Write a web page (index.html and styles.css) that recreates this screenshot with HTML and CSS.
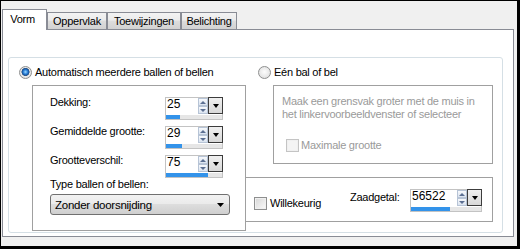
FILE: index.html
```html
<!DOCTYPE html>
<html lang="nl">
<head>
    <meta charset="UTF-8">
    <title>Vorm</title>
    <link rel="stylesheet" href="styles.css">
</head>
<body>
<div class="window">
    <!-- tabbladen -->
    <div class="tabs">
        <div class="tab active">Vorm</div>
        <div class="tab t-opp">Oppervlak</div>
        <div class="tab t-toe">Toewijzingen</div>
        <div class="tab t-bel">Belichting</div>
    </div>

    <div class="panel">
        <div class="group">
            <!-- linker kolom -->
            <div class="col-left">
                <div class="radio-row"><span class="radio on"></span>Automatisch meerdere ballen of bellen</div>
                <div class="box box-left">
                    <div class="fields">
                        <div class="field">
                            <span class="field-label">Dekking:</span>
                            <div class="spin">
                                <div class="spin-top"><span class="spin-val">25</span><span class="spin-arrows"><i class="up"></i><i class="down"></i></span><span class="spin-drop"></span></div>
                                <div class="spin-bar"><div class="spin-fill" style="width:25%"></div></div>
                            </div>
                        </div>
                        <div class="field">
                            <span class="field-label">Gemiddelde grootte:</span>
                            <div class="spin">
                                <div class="spin-top"><span class="spin-val">29</span><span class="spin-arrows"><i class="up"></i><i class="down"></i></span><span class="spin-drop"></span></div>
                                <div class="spin-bar"><div class="spin-fill" style="width:29%"></div></div>
                            </div>
                        </div>
                        <div class="field">
                            <span class="field-label">Grootteverschil:</span>
                            <div class="spin">
                                <div class="spin-top"><span class="spin-val">75</span><span class="spin-arrows"><i class="up"></i><i class="down"></i></span><span class="spin-drop"></span></div>
                                <div class="spin-bar"><div class="spin-fill" style="width:75%"></div></div>
                            </div>
                        </div>
                    </div>
                    <div class="type-label">Type ballen of bellen:</div>
                    <div class="combo">
                        <span>Zonder doorsnijding</span>
                        <svg width="7" height="4" viewBox="0 0 7 4"><polygon points="0,0 7,0 3.5,4" fill="#000"/></svg>
                    </div>
                </div>
            </div>

            <!-- rechter kolom -->
            <div class="col-right">
                <div class="radio-row"><span class="radio"></span>Eén bal of bel</div>
                <div class="box box-right">
                    <div class="hint">Maak een grensvak groter met de muis in<br>het linkervoorbeeldvenster of selecteer</div>
                    <div class="check-row disabled"><span class="check"></span>Maximale grootte</div>
                </div>
                <div class="box box-seed">
                    <div class="check-row seed-check"><span class="check"></span>Willekeurig</div>
                    <span class="seed-label">Zaadgetal:</span>
                    <div class="spin wide">
                        <div class="spin-top"><span class="spin-val">56522</span><span class="spin-arrows"><i class="up"></i><i class="down"></i></span><span class="spin-drop"></span></div>
                        <div class="spin-bar"><div class="spin-fill" style="width:56%"></div></div>
                    </div>
                </div>
            </div>
        </div>
    </div>
</div>
</body>
</html>
```

FILE: styles.css
```css
body {
    margin: 0;
    font-family: "Liberation Sans", Arial, sans-serif;
    font-size: 11px;
    letter-spacing: -0.25px;
    color: #000;
}
.window {
    width: 520px;
    height: 249px;
    box-sizing: border-box;
    border-style: solid;
    border-color: #000;
    border-width: 1px 3px 3px 1px;
    background: #f0f0f0;
    padding: 8px 0 0 1px;
}

/* tabs */
.tabs {
    display: flex;
    align-items: flex-end;
    height: 20px;
}
.tab {
    height: 17px;
    box-sizing: border-box;
    border: 1px solid #898c95;
    border-bottom: none;
    background: linear-gradient(#f3f3f3, #ebebeb 45%, #dddddd 50%, #d2d2d2);
    text-align: center;
    line-height: 14px;
    padding-top: 1px;
}
.tab.active {
    width: 45px;
    height: 21px;
    margin-bottom: -1px;
    padding: 2px 4px 0 0;
    background: #fff;
    position: relative;
    z-index: 1;
}
.t-opp { width: 60px; }
.t-toe { width: 74px; }
.t-bel { width: 56px; }

.panel {
    width: 512px;
    height: 208px;
    box-sizing: border-box;
    border: 1px solid #898c95;
    background: #fff;
    padding: 27px 0 0 5px;
}
.group {
    width: 495px;
    height: 176px;
    box-sizing: border-box;
    border: 1px solid #d5dfe5;
    border-radius: 3px;
    padding: 7px 0 0 0;
    display: flex;
}
.col-left { width: 237px; }
.col-right { width: 255px; }

.radio-row {
    display: flex;
    align-items: center;
    gap: 3px;
    height: 14px;
    line-height: 14px;
}
.col-left .radio-row { padding-left: 10px; }
.col-right .radio-row { padding-left: 12px; }
.radio {
    width: 13px;
    height: 13px;
    box-sizing: border-box;
    border: 1px solid #8e8f8f;
    border-radius: 50%;
    background: radial-gradient(circle at 50% 45%, #fdfdfd, #d9d9d9);
}
.radio.on {
    background: radial-gradient(circle at 50% 45%, #9fdcff 0, #3b8ee0 1.8px, #1458a8 3.2px, #3a5a80 3.8px, transparent 4.3px),
                radial-gradient(circle at 50% 45%, #fdfdfd, #d9d9d9);
}

.box {
    box-sizing: border-box;
    border: 1px solid #a0a0a0;
}
.box-left {
    width: 214px;
    height: 146px;
    margin: 6px 0 0 23px;
    padding: 11px 0 0 17px;
}
.fields {
    display: flex;
    flex-direction: column;
    gap: 6px;
}
.field {
    display: flex;
    align-items: flex-start;
}
.field-label {
    width: 115px;
    margin-top: -2px;
    line-height: 14px;
}
.type-label {
    margin-top: -1px;
    line-height: 14px;
}
.combo {
    width: 180px;
    height: 21px;
    margin-top: 3px;
    box-sizing: border-box;
    border: 1px solid #707070;
    border-radius: 3px;
    background: linear-gradient(#f2f2f2, #ebebeb 45%, #dddddd 50%, #cfcfcf);
    display: flex;
    align-items: center;
    justify-content: space-between;
    padding: 0 5px 0 4px;
    font-size: 11.5px;
}

/* spin control met schuifbalk */
.spin {
    width: 58px;
    height: 23px;
    box-sizing: border-box;
    border: 1px solid #c3c3c3;
    background: #fff;
    display: flex;
    flex-direction: column;
}
.spin.wide { width: 72px; }
.spin-top {
    display: flex;
    height: 16px;
}
.spin-val {
    flex: 1;
    font-size: 12px;
    line-height: 13px;
    padding-left: 1px;
    letter-spacing: 0;
}
.spin-arrows {
    width: 10px;
    display: flex;
    flex-direction: column;
}
.spin-arrows i {
    flex: 1;
    box-sizing: border-box;
    border: 1px solid #b7c4d6;
    background: linear-gradient(#f7f9fc, #dbe4f0);
    display: flex;
    align-items: center;
    justify-content: center;
}
.spin-arrows i::after {
    content: "";
    border-left: 3px solid transparent;
    border-right: 3px solid transparent;
}
.spin-arrows .up::after { border-bottom: 3px solid #5b6f92; }
.spin-arrows .down::after { border-top: 3px solid #5b6f92; }
.spin-drop {
    width: 15px;
    height: 17px;
    margin: -1px -1px 0 0;
    box-sizing: border-box;
    border: 1px solid #3c3c3c;
    background: linear-gradient(#f0f0f0, #d8d8d8);
    display: flex;
    align-items: center;
    justify-content: center;
}
.spin-drop::after {
    content: "";
    border-left: 3.5px solid transparent;
    border-right: 3.5px solid transparent;
    border-top: 4px solid #000;
}
.spin-bar {
    height: 4px;
    margin-top: 1px;
    background: #e6e6e6;
}
.spin-fill {
    height: 100%;
    background: #3393ea;
}

/* rechts */
.box-right {
    width: 220px;
    height: 79px;
    margin: 6px 0 0 27px;
    padding: 9px 0 0 8px;
}
.hint {
    color: #9a9a9a;
    line-height: 13px;
}
.check-row {
    display: flex;
    align-items: center;
    gap: 3px;
    height: 14px;
    line-height: 14px;
}
.check {
    width: 13px;
    height: 13px;
    box-sizing: border-box;
    border: 1px solid #8e8f8f;
    background: linear-gradient(135deg, #d6d6d6, #fbfbfb);
    box-shadow: inset 0 0 0 1px #f0f0f0;
}
.box-right .check-row {
    margin: 17px 0 0 4px;
    gap: 2px;
}
.check-row.disabled { color: #9a9a9a; }
.check-row.disabled .check {
    border-color: #c4c4c4;
    background: #f4f4f4;
}
.box-seed {
    width: 248px;
    height: 45px;
    margin: 13px 0 0 -1px;
    padding: 11px 0 0 8px;
    display: flex;
    align-items: flex-start;
}
.seed-check {
    width: 96px;
    margin-top: 7px;
}
.seed-label {
    width: 60px;
    margin-top: 1px;
    line-height: 14px;
}
```
